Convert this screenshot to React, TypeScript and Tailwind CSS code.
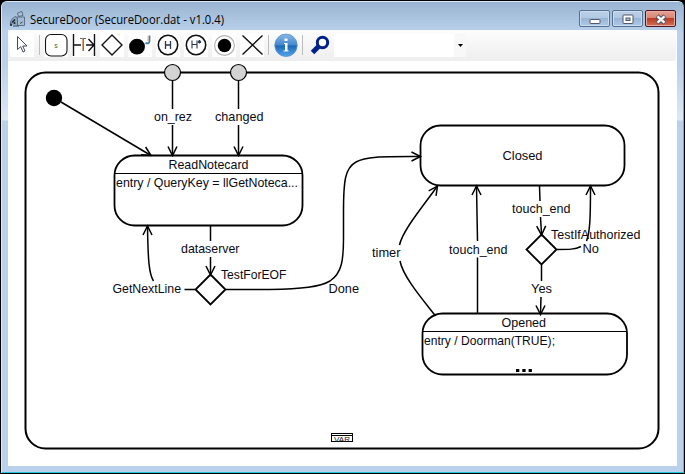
import React from 'react';

type LabelProps = { x: number; y: number; w: number; children: string };

function Label({ x, y, w, children }: LabelProps) {
  return (
    <text x={x} y={y} textLength={w} lengthAdjust="spacingAndGlyphs" fill="#0a0a14">
      {children}
    </text>
  );
}

// Open arrow head whose tip sits at (x, y); angle 0 points down.
function Head({ x, y, a = 0 }: { x: number; y: number; a?: number }) {
  return <path d="M-4.5 -9L0 0L4.5 -9" transform={`translate(${x} ${y}) rotate(${a})`} />;
}

function Diagram() {
  return (
    <svg
      className="block h-[405px] w-[669px] font-['Liberation_Sans',Arial,sans-serif] text-[13px]"
      viewBox="8 61 669 405"
      fill="none"
      stroke="#000"
      strokeWidth="1.5"
    >
      <rect x="25.5" y="72.5" width="633" height="376" rx="20" strokeWidth="2" />

      <circle cx="54" cy="98" r="8.2" fill="#000" stroke="none" />
      <path d="M61 102L151 155.500" />
      <Head x={151} y={155.5} a={-59} />
      <path d="M172.500 81V109M172.500 125V155M238.500 81V109M238.500 125V155" />
      <Head x={172.5} y={155.5} />
      <Head x={238.5} y={155.5} />
      <circle cx="172.500" cy="72.500" r="8" fill="#d3d3d3" strokeWidth="1.200" />
      <circle cx="238.500" cy="72.500" r="8" fill="#d3d3d3" strokeWidth="1.200" />

      <rect x="114.500" y="155.500" width="188" height="70" rx="20" strokeWidth="1.800" />
      <path d="M115 173.500H302" strokeWidth="1" />
      <path d="M210.500 226V241M210.500 257V274" />
      <Head x={210.5} y={275} />
      <path d="M210.500 274.500L225.500 289.500L210.500 304.500L195.500 289.500Z" strokeWidth="1.800" />
      <path d="M195 289.500H184.500M153.500 281C149 274 148 260 147.500 226" />
      <Head x={147.5} y={226} a={180} />
      <path d="M226 289.500H270C302 289 320 287 330 281C342 273 343.500 260 343.500 238V211C343.500 181 345 168 356 162C366 156 385 156.500 420 156.500" />
      <Head x={420.5} y={156.5} a={-90} />

      <rect x="420.500" y="125.500" width="204" height="60" rx="20" strokeWidth="1.800" />
      <path d="M435.500 316C424 301 403 277 400 261M399.500 245C403 230 421 209 437.500 186" />
      <Head x={437.5} y={186} a={-145} />
      <path d="M477.500 314V257.500M477.500 241L476.500 186" />
      <Head x={476.5} y={186} a={180} />
      <path d="M539.500 186L540 201M540.500 217L541.500 234" />
      <Head x={541.5} y={235} a={-2} />
      <path d="M541.500 234.500L556.500 249.500L541.500 264.500L526.500 249.500Z" strokeWidth="1.800" />
      <path d="M557 249.500C569 249.500 575 249.500 581 246.500M586.500 241C590 232 590.500 218 590.500 186" />
      <Head x={590.5} y={186} a={180} />
      <path d="M541.500 265V281M541 297L540.500 314" />
      <Head x={540.5} y={314.5} />
      <rect x="422.500" y="313.500" width="204.500" height="61" rx="20" strokeWidth="1.800" />
      <path d="M423 331.500H626" strokeWidth="1" />
      <path d="M516 370.500h3.300M522.300 370.500h3.300M528.600 370.500h3.300" strokeWidth="3" />

      <rect x="331.500" y="433.500" width="21" height="8" strokeWidth="1" />
      <path d="M332 435.500H352" strokeWidth="1" />

      <g stroke="none">
        <Label x={154} y={121} w={38}>on_rez</Label>
        <Label x={215} y={121} w={48.5}>changed</Label>
        <Label x={168.5} y={169} w={80}>ReadNotecard</Label>
        <Label x={116} y={187} w={182}>entry / QueryKey = llGetNoteca...</Label>
        <Label x={181} y={253} w={58.500}>dataserver</Label>
        <Label x={221} y={279} w={65.500}>TestForEOF</Label>
        <Label x={112.5} y={293} w={68.500}>GetNextLine</Label>
        <Label x={328.500} y={293} w={30.500}>Done</Label>
        <Label x={502.5} y={160} w={40}>Closed</Label>
        <Label x={512} y={213} w={58.500}>touch_end</Label>
        <Label x={551} y={239} w={89.500}>TestIfAuthorized</Label>
        <Label x={582.5} y={253} w={16.500}>No</Label>
        <Label x={372} y={257} w={28.500}>timer</Label>
        <Label x={449} y={254} w={58.500}>touch_end</Label>
        <Label x={531} y={293} w={21}>Yes</Label>
        <Label x={501.5} y={327} w={44.500}>Opened</Label>
        <Label x={424} y={345} w={131}>entry / Doorman(TRUE);</Label>
        <text x="334" y="441.500" fontSize="7.500" textLength="16" lengthAdjust="spacingAndGlyphs" fill="#222">VAR</text>
      </g>
    </svg>
  );
}

function Tool({ children, className = 'w-7' }: { children: React.ReactNode; className?: string }) {
  return (
    <button className={`flex h-6 shrink-0 items-center justify-center ${className}`}>
      <span className="block h-6 w-6 bg-white">
        <svg className="block h-6 w-6" viewBox="0 0 24 24" fill="none" stroke="#111" strokeWidth="1.400">
          {children}
        </svg>
      </span>
    </button>
  );
}

function Divider() {
  return <div className="h-5 w-px shrink-0 bg-[#bdbdbd]" />;
}

function Toolbar() {
  return (
    <div className="flex h-[31px] w-[668px] items-center rounded-br-sm bg-gradient-to-b from-[#fdfdfd] to-[#eeeeee] pb-px pl-[2px]">
      <Tool className="mr-[3px] w-6">
        <path d="M7.500 3.500V16.500L10.700 13.700L13 19L15 18L12.700 13H17Z" fill="#fff" stroke="#444b58" strokeWidth="1" />
      </Tool>
      <div className="w-[2px]" />
      <Divider />
      <div className="w-[2px]" />
      <Tool>
        <rect x="1.500" y="1.500" width="21.500" height="21.500" rx="5.500" strokeWidth="1.100" />
        <text x="10.300" y="15" fontSize="7" fill="#287038" stroke="none" className="font-['Liberation_Sans',sans-serif]">s</text>
      </Tool>
      <Tool>
        <path d="M1.500 1V23M22.500 1V23M2 12H9M14 12H22M16.500 6L22 12L16.500 18" />
        <path d="M8 5.500H14" stroke="#596a80" strokeWidth="1" />
        <path d="M10.500 5.500V18" stroke="#d9a878" strokeWidth="1" />
        <path d="M11.500 5.500V18" stroke="#5480a8" strokeWidth="1" />
      </Tool>
      <Tool>
        <path d="M12 2L22 12L12 22L2 12Z" />
        <path d="M18.500 1.500H19.500" stroke="#f2bd45" strokeWidth="1" />
      </Tool>
      <Tool>
        <circle cx="9" cy="13.700" r="7.900" fill="#000" stroke="none" />
        <path d="M21.500 2.500V8C21.500 10.500 19 11 17.500 9.800" stroke="#477ca8" strokeWidth="1.800" />
        <path d="M20 3V8" stroke="#eba15a" strokeWidth=".8" />
      </Tool>
      <Tool>
        <circle cx="12" cy="12" r="9.700" strokeWidth="1.600" />
        <path d="M9.500 8V16M14.500 8V16M9.500 12H14.500" stroke="#283650" strokeWidth="1.300" />
      </Tool>
      <Tool>
        <circle cx="12" cy="12" r="9.700" strokeWidth="1.600" />
        <path d="M8 7.500V15.500M13 7.500V15.500M8 11.500H13M15.500 7V10.500M14 8L17 9.500M17 8L14 9.500" stroke="#283650" strokeWidth="1.100" />
      </Tool>
      <Tool>
        <circle cx="12.500" cy="12.500" r="9.900" stroke="#b4b4b4" strokeWidth="1.200" />
        <circle cx="12.500" cy="12.500" r="6.700" fill="#000" stroke="none" />
      </Tool>
      <Tool>
        <path d="M2.500 2.500L22.500 21.500M22.500 2.500L2.500 21.500" strokeWidth="1.400" />
      </Tool>
      <div className="w-[2px]" />
      <Divider />
      <div className="w-[5px]" />
      <svg className="h-6 w-6 shrink-0" viewBox="0 0 24 24">
        <defs>
          <linearGradient id="info" x2="0" y2="1">
            <stop stopColor="#89b8e8" />
            <stop offset=".47" stopColor="#4589cf" />
            <stop offset=".53" stopColor="#1d68b9" />
            <stop offset="1" stopColor="#55a7ec" />
          </linearGradient>
        </defs>
        <circle cx="12" cy="12.300" r="11.200" fill="url(#info)" stroke="#5791cc" strokeWidth=".8" />
        <path d="M10.500 5.500H13.500V8H10.500ZM10 10H13.500V17.500H14.500V18.500H9.500V17.500H11V11H10Z" fill="#fff" />
      </svg>
      <div className="w-[4px]" />
      <Divider />
      <div className="w-[7px]" />
      <svg className="h-6 w-5 shrink-0" viewBox="0 0 20 24" fill="none" stroke="#00208a">
        <circle cx="12.500" cy="9.500" r="5.200" strokeWidth="3" fill="#fff" />
        <path d="M9 13L2.500 19.500" strokeWidth="5" />
      </svg>
      <div className="ml-[4px] flex h-[23px] w-[132px] shrink-0 justify-end bg-white">
        <div className="flex w-[12px] items-center justify-center bg-[#f8f8f8]">
          <svg className="h-[3px] w-[5px]" viewBox="0 0 5 3"><path d="M0 0H5L2.500 3Z" /></svg>
        </div>
      </div>
    </div>
  );
}

function WindowButtons() {
  const plain =
    'flex h-[17px] w-[31px] items-center justify-center rounded-[2px] border border-[#58708f] bg-[linear-gradient(#bdd0e7_0%,#b0c8e1_45%,#98b5d5_50%,#adcae7_100%)] shadow-[inset_0_0_0_1px_#c9dcf0]';
  return (
    <div className="mr-[7px] flex gap-[2px] pt-[2px]">
      <button className={plain}>
        <svg className="h-4 w-4" viewBox="0 0 16 16"><rect x="3" y="8.500" width="10" height="4" rx=".5" fill="#fff" stroke="#535766" /></svg>
      </button>
      <button className={plain}>
        <svg className="h-4 w-4" viewBox="0 0 16 16" stroke="#535766">
          <rect x="3" y="4" width="10" height="8.500" rx=".5" fill="#fff" />
          <rect x="6" y="7" width="4" height="2.500" fill="#a5c0dc" />
        </svg>
      </button>
      <button className="flex h-[17px] w-[31px] items-center justify-center rounded-[2px] border border-[#4d1523] bg-[linear-gradient(#e5a195_0%,#d98776_45%,#bd3b24_50%,#d27058_100%)] shadow-[inset_0_0_0_1px_#e7aba0]">
        <svg className="h-4 w-4" viewBox="0 0 16 16" fill="none">
          <path d="M4 5L12 12M12 5L4 12" stroke="#535666" strokeWidth="4.500" />
          <path d="M4.500 5.400L11.500 11.600M11.500 5.400L4.500 11.600" stroke="#f7f7f7" strokeWidth="2.500" />
        </svg>
      </button>
    </div>
  );
}

function TitleBar() {
  return (
    <header className="flex h-[28px] items-start justify-between bg-gradient-to-b from-[#99b4d1] to-[#b7cfe9] pt-[6px] pl-[7px]">
      <div className="flex items-center gap-[4px]">
        <svg className="h-[18px] w-[17px]" viewBox="0 0 17 18" fill="none" stroke="#56677a">
          <path d="M8.500 3L13 1.500L14 5.500L9.500 6.500Z" fill="#a9c0d7" strokeWidth=".9" />
          <path d="M8 7H15.500V15.500H8Z" fill="#a4bbd3" strokeWidth=".9" />
          <path d="M1.500 15C1 11 3 7.500 7 6.500L8.500 9V15.500" fill="#91a9c1" strokeWidth=".9" />
          <path d="M3 12.500L6 9.500M2 13.500V16M5.500 12V14" stroke="#202c38" strokeWidth="1.700" />
          <path d="M4 16H10M11 13.500L13.500 12" stroke="#3b4b5c" />
        </svg>
        <svg className="h-[22px] w-[200px] overflow-visible font-['Open_Sans','Noto_Sans',sans-serif] text-[12px]" viewBox="0 0 200 22">
          <text x="0" y="16" textLength="194" lengthAdjust="spacingAndGlyphs" fill="#000">SecureDoor (SecureDoor.dat - v1.0.4)</text>
        </svg>
      </div>
      <WindowButtons />
    </header>
  );
}

export default function App() {
  return (
    <div className="h-[474px] w-[685px] overflow-hidden bg-black p-px">
      <div className="flex h-[472px] w-[683px] flex-col overflow-hidden rounded-t-[6px] border border-t-[#dce8f5] border-r-[#35c6e0] border-b-[#20c5dc] border-l-[#dce8f5] bg-[#b9d1ea]">
        <TitleBar />
        <div className="flex h-[436px]">
          <div className="h-[436px] w-[6px] shrink-0 bg-[linear-gradient(#b9d1ea_0px,#b9d1ea_35px,#dce8f5_90px,#b9d1ea_91px)]" />
          <main className="h-[436px] w-[669px] shrink-0 bg-white">
            <Toolbar />
            <Diagram />
          </main>
          <div className="h-[436px] w-[6px] shrink-0 bg-[linear-gradient(#b9d1ea_0px,#b9d1ea_35px,#dce8f5_90px,#b9d1ea_91px)]" />
        </div>
      </div>
    </div>
  );
}
